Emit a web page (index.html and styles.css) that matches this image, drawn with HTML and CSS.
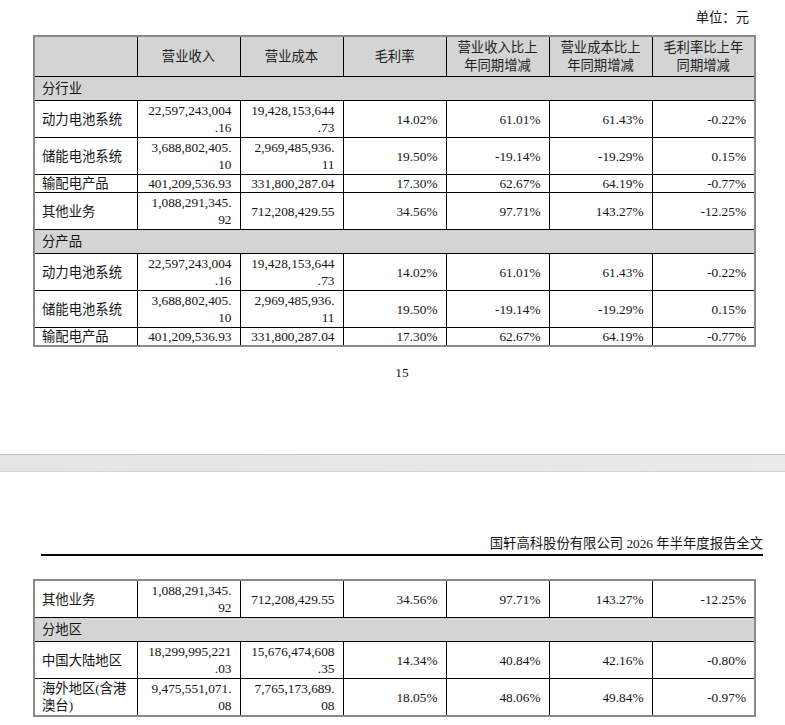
FILE: index.html
```html
<!DOCTYPE html>
<html lang="zh-CN">
<head>
<meta charset="utf-8">
<title>国轩高科股份有限公司 2026 年半年度报告全文</title>
<link rel="stylesheet" href="styles.css">
</head>
<body>
<div class="page page-one">
  <div class="unit">单位：元</div>
  <table class="report">
    <colgroup>
      <col><col><col><col><col><col><col>
    </colgroup>
    <tr class="head">
      <th></th>
      <th>营业收入</th>
      <th>营业成本</th>
      <th>毛利率</th>
      <th>营业收入比上<br>年同期增减</th>
      <th>营业成本比上<br>年同期增减</th>
      <th>毛利率比上年<br>同期增减</th>
    </tr>
    <tr class="group"><td colspan="7">分行业</td></tr>
    <tr class="r2">
      <td class="label">动力电池系统</td>
      <td class="num">22,597,243,004<br>.16</td>
      <td class="num">19,428,153,644<br>.73</td>
      <td class="num">14.02%</td>
      <td class="num">61.01%</td>
      <td class="num">61.43%</td>
      <td class="num">-0.22%</td>
    </tr>
    <tr class="r2">
      <td class="label">储能电池系统</td>
      <td class="num">3,688,802,405.<br>10</td>
      <td class="num">2,969,485,936.<br>11</td>
      <td class="num">19.50%</td>
      <td class="num">-19.14%</td>
      <td class="num">-19.29%</td>
      <td class="num">0.15%</td>
    </tr>
    <tr class="r1">
      <td class="label">输配电产品</td>
      <td class="num">401,209,536.93</td>
      <td class="num">331,800,287.04</td>
      <td class="num">17.30%</td>
      <td class="num">62.67%</td>
      <td class="num">64.19%</td>
      <td class="num">-0.77%</td>
    </tr>
    <tr class="r2">
      <td class="label">其他业务</td>
      <td class="num">1,088,291,345.<br>92</td>
      <td class="num">712,208,429.55</td>
      <td class="num">34.56%</td>
      <td class="num">97.71%</td>
      <td class="num">143.27%</td>
      <td class="num">-12.25%</td>
    </tr>
    <tr class="group"><td colspan="7">分产品</td></tr>
    <tr class="r2">
      <td class="label">动力电池系统</td>
      <td class="num">22,597,243,004<br>.16</td>
      <td class="num">19,428,153,644<br>.73</td>
      <td class="num">14.02%</td>
      <td class="num">61.01%</td>
      <td class="num">61.43%</td>
      <td class="num">-0.22%</td>
    </tr>
    <tr class="r2">
      <td class="label">储能电池系统</td>
      <td class="num">3,688,802,405.<br>10</td>
      <td class="num">2,969,485,936.<br>11</td>
      <td class="num">19.50%</td>
      <td class="num">-19.14%</td>
      <td class="num">-19.29%</td>
      <td class="num">0.15%</td>
    </tr>
    <tr class="r1">
      <td class="label">输配电产品</td>
      <td class="num">401,209,536.93</td>
      <td class="num">331,800,287.04</td>
      <td class="num">17.30%</td>
      <td class="num">62.67%</td>
      <td class="num">64.19%</td>
      <td class="num">-0.77%</td>
    </tr>
  </table>
  <div class="page-number">15</div>
</div>
<div class="page-gap"></div>
<div class="page page-two">
  <div class="running-head">国轩高科股份有限公司 2026 年半年度报告全文</div>
  <table class="report">
    <colgroup>
      <col><col><col><col><col><col><col>
    </colgroup>
    <tr class="r2">
      <td class="label">其他业务</td>
      <td class="num">1,088,291,345.<br>92</td>
      <td class="num">712,208,429.55</td>
      <td class="num">34.56%</td>
      <td class="num">97.71%</td>
      <td class="num">143.27%</td>
      <td class="num">-12.25%</td>
    </tr>
    <tr class="group"><td colspan="7">分地区</td></tr>
    <tr class="r2">
      <td class="label">中国大陆地区</td>
      <td class="num">18,299,995,221<br>.03</td>
      <td class="num">15,676,474,608<br>.35</td>
      <td class="num">14.34%</td>
      <td class="num">40.84%</td>
      <td class="num">42.16%</td>
      <td class="num">-0.80%</td>
    </tr>
    <tr class="r2">
      <td class="label">海外地区(含港<br>澳台)</td>
      <td class="num">9,475,551,071.<br>08</td>
      <td class="num">7,765,173,689.<br>08</td>
      <td class="num">18.05%</td>
      <td class="num">48.06%</td>
      <td class="num">49.84%</td>
      <td class="num">-0.97%</td>
    </tr>
  </table>
</div>
</body>
</html>
```

FILE: styles.css
```css
html, body {
  margin: 0;
  padding: 0;
  background: #ffffff;
}

body {
  font-family: "Liberation Serif", "Noto Sans CJK SC", serif;
  font-size: 13.33px;
  line-height: 17px;
  color: #141414;
}

.page-one {
  height: 454px;
  padding-top: 9px;
  box-sizing: border-box;
}

.unit {
  text-align: right;
  padding-right: 36px;
  margin-bottom: 9px;
}

.report {
  border-collapse: collapse;
  table-layout: fixed;
  width: 723px;
  margin-left: 33px;
  border: 2px solid #8a8a8a;
}

.report th,
.report td {
  border: 1px solid #000;
  padding: 0 8px;
  font-weight: normal;
  vertical-align: middle;
}

.report .head th {
  background: #d4d4d4;
  text-align: center;
  height: 39px;
  line-height: 18px;
  color: #1e1e1e;
}

.report .group td {
  background: #d4d4d4;
  height: 23px;
  padding-left: 7px;
}

.report .r2 td {
  height: 36px;
}

.report .r1 td {
  height: 16.5px;
}

.report .label {
  text-align: left;
  padding-left: 7px;
  padding-right: 2px;
}

.report .num {
  text-align: right;
  padding-right: 8px;
}

.page-number {
  text-align: center;
  padding-left: 19px;
  margin-top: 17px;
}

.page-gap {
  height: 16px;
  border-top: 1px solid #c4c4c4;
  border-bottom: 1px solid #d2d2d2;
  background: linear-gradient(to right, #e2e5e8 0%, #e6e7e8 45%, #ede9e6 100%);
}

.page-two {
  padding-top: 63px;
}

.running-head {
  margin: 0 22px 0 41px;
  text-align: right;
  border-bottom: 2px solid #000;
  padding-bottom: 2px;
  font-family: "Liberation Serif", "Noto Sans CJK SC", serif;
  color: #161616;
}

.page-two .report {
  margin-top: 23px;
}
```
